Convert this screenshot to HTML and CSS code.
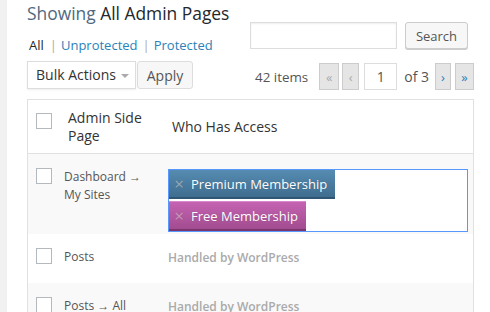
FILE: index.html
```html
<!DOCTYPE html>
<html>
<head>
<meta charset="utf-8">
<link rel="stylesheet" href="styles.css">
</head>
<body>
<div class="sidebar"></div>
<div class="wrap">
  <h2 class="title"><span class="muted">Showing</span> All Admin Pages</h2>
  <div class="toprow">
    <ul class="filters">
      <li class="current">All</li>
      <li><span class="sep">|</span><a>Unprotected</a></li>
      <li><span class="sep">|</span><a>Protected</a></li>
    </ul>
    <div class="searchbox">
      <input class="search-input" type="text">
      <button class="btn search-btn">Search</button>
    </div>
  </div>
  <div class="navrow">
    <div class="bulk">
      <div class="select">Bulk Actions <span class="caret"></span></div>
      <button class="btn apply">Apply</button>
    </div>
    <div class="pager">
      <span class="count">42 items</span>
      <span class="pbtn dis first">&laquo;</span>
      <span class="pbtn dis prev">&lsaquo;</span>
      <input class="page-input" type="text" value="1">
      <span class="of">of 3</span>
      <span class="pbtn next">&rsaquo;</span>
      <span class="pbtn last">&raquo;</span>
    </div>
  </div>
  <div class="table">
    <div class="row head">
      <div class="cb"><span class="check"></span></div>
      <div class="col-page">Admin Side<br>Page</div>
      <div class="col-access">Who Has Access</div>
    </div>
    <div class="row alt r1">
      <div class="cb"><span class="check"></span></div>
      <div class="col-page">Dashboard &rarr;<br>My Sites</div>
      <div class="col-access">
        <div class="tagbox">
          <span class="tag premium"><span class="x">&times;</span>Premium Membership</span>
          <span class="tag free"><span class="x">&times;</span>Free Membership</span>
        </div>
      </div>
    </div>
    <div class="row r2">
      <div class="cb"><span class="check"></span></div>
      <div class="col-page">Posts</div>
      <div class="col-access handled">Handled by WordPress</div>
    </div>
    <div class="row alt r3">
      <div class="cb"><span class="check"></span></div>
      <div class="col-page">Posts &rarr; All</div>
      <div class="col-access handled">Handled by WordPress</div>
    </div>
  </div>
</div>
</body>
</html>
```
FILE: styles.css
```css
* { box-sizing: border-box; }
html, body { margin: 0; padding: 0; }
body {
  width: 490px; height: 312px; overflow: hidden;
  font-family: "Open Sans", "Liberation Sans", sans-serif;
  color: #444; background: #fff;
  display: flex;
}
.sidebar { width: 7px; flex: none; background: #f1f1f1; }
.wrap { flex: 1; padding: 0 16px 0 20px; }
.title {
  margin: 0; padding-top: 1px;
  font-size: 17.4px; font-weight: 400; line-height: 24px; color: #23282d;
}
.title .muted { color: #50697f; }
.toprow { display: flex; justify-content: space-between; margin-top: -1px; }
.filters {
  list-style: none; margin: 0; padding: 0 0 0 2px; display: flex;
  font-size: 13px; line-height: 18px; padding-top: 12px;
}
.filters li { color: #23282d; }
.filters a { color: #2a82b8; }
.filters .sep { color: #aaa; margin: 0 4px 0 6px; }
.filters li:nth-child(3) .sep { margin-left: 5px; }
.searchbox { display: flex; gap: 8px; margin-top: -2px; padding-right: 6px; }
.search-input {
  width: 147px; height: 27px; border: 1px solid #ddd; margin: 0;
  box-shadow: inset 0 1px 2px rgba(0,0,0,.07); padding: 0;
}
.btn {
  font-family: "Open Sans", "Liberation Sans", sans-serif;
  background: #f7f7f7; border: 1px solid #ccc; border-radius: 3px;
  box-shadow: 0 1px 0 #ccc; color: #555; font-size: 13px;
  padding: 0 8px; height: 27px; margin: 0;
}
.search-btn { width: 63px; }
.navrow { display: flex; justify-content: space-between; margin-top: 7px; height: 29px; }
.bulk { display: flex; gap: 1px; }
.select {
  width: 109px; height: 28px; border: 1px solid #ddd; border-radius: 0;
  font-size: 14px; line-height: 26px; padding-left: 8px; color: #333;
  box-shadow: 0 1px 2px rgba(0,0,0,.07); position: relative;
}
.caret {
  position: absolute; right: 6px; top: 12px;
  border-left: 4px solid transparent; border-right: 4px solid transparent;
  border-top: 4px solid #aaa;
}
.apply { width: 56px; height: 28px; font-size: 14px; box-shadow: none; border-color: #ddd; color: #555; }
.pager { display: flex; align-items: center; font-size: 14px; color: #555; margin-top: 2px; height: 27px; }
.count { margin-right: 11px; font-size: 13.4px; }
.pbtn {
  display: inline-flex; align-items: center; justify-content: center;
  height: 27px; background: #e5e5e5; border: 1px solid #ccc;
  font-size: 13px; color: #aaa; margin-right: 3px;
}
.first { width: 20px; }
.prev { width: 17px; margin-right: 5px; }
.next { width: 16px; color: #2a82b8; margin-left: 6px; margin-right: 4px; }
.last { width: 19px; color: #2a82b8; margin-right: 0; }
.pbtn.dis { color: #aaa; }
.page-input {
  width: 33px; height: 27px; border: 1px solid #ddd; text-align: center;
  font-family: "Open Sans", "Liberation Sans", sans-serif; font-size: 14px; color: #555; padding: 0; margin: 0;
}
.of { margin-left: 7px; }
.table {
  margin-top: 9px; border: 1px solid #e1e1e1; border-bottom: 0;
  width: 447px;
}
.row { display: flex; }
.row.alt { background: #f9f9f9; }
.cb { width: 36px; flex: none; padding-left: 8px; }
.check {
  display: block; width: 16px; height: 16px; border: 1px solid #b4b9be; background: #fff;
}
.col-page { width: 104px; flex: none; }
.col-access { flex: 1; padding-right: 5px; }
.head { height: 54px; border-bottom: 1px solid #e1e1e1; color: #333; font-size: 14px; line-height: 18px; }
.head .cb { padding-top: 13px; }
.head .col-page { padding-left: 4px; padding-top: 9px; }
.head .col-access { padding-top: 18px; padding-left: 4px; }
.r1, .r2, .r3 { font-size: 12px; line-height: 18px; color: #555; }
.r1 { height: 80px; }
.r1 .cb { padding-top: 14px; }
.r1 .col-page { padding-top: 14px; }
.r1 .col-access { padding-top: 15px; }
.r2 { height: 49px; }
.r2 .cb, .r3 .cb { padding-top: 14px; }
.r2 .col-page, .r3 .col-page { padding-top: 14px; }
.handled { color: #aaa; font-weight: 600; font-size: 12px; padding-top: 15px; }
.r2 .col-access, .r3 .col-access { padding-top: 15px; }
.r3 { height: 40px; }
.tagbox {
  border: 1px solid #5897fb; height: 63px; width: 300px; background: #fff;
  display: flex; flex-direction: column; align-items: flex-start; gap: 2px;
}
.tag {
  display: flex; align-items: center; color: #fff; font-size: 13px; height: 29px;
  padding: 0 3px 0 4px; text-shadow: 0 0 1px rgba(0,0,0,.2);
}
.tag .x { color: rgba(255,255,255,.45); font-size: 17px; margin-right: 6px; width: 12px; text-align: center; }
.premium {
  width: 166px;
  background: linear-gradient(#568bb1, #3f6d8f);
  border-bottom: 2px solid #2f5673;
}
.free {
  width: 137px; height: 30px;
  background: linear-gradient(#c463b2, #a24c90);
  border-top: 1px solid #d98ace;
  border-bottom: 2px solid #7d356f;
}
```
